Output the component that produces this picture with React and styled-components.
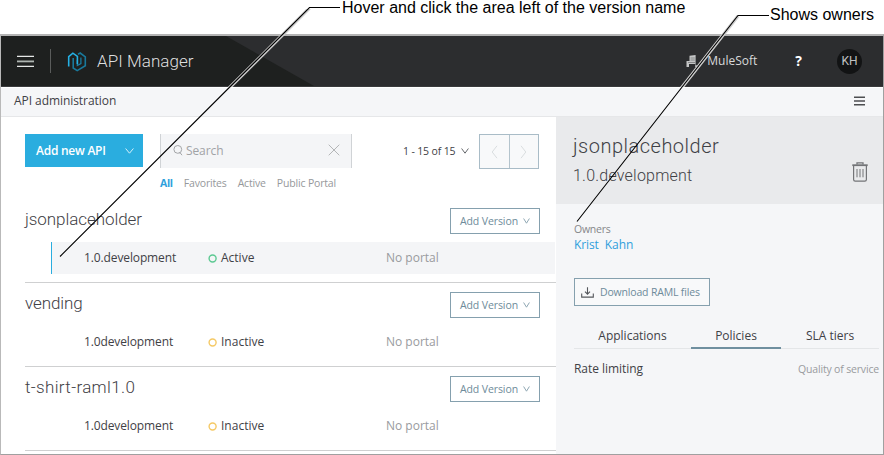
import React from 'react';
import styled, { createGlobalStyle } from 'styled-components';

const Global = createGlobalStyle`
  *, *::before { box-sizing: border-box; }
  body { margin: 0; background: #fff; font-family: "Open Sans", "Noto Sans", sans-serif; color: #3f4146; }
  svg { flex: none; }
`;

const Page = styled.div`
  position: relative;
  width: 884px;
  height: 455px;
  padding-top: 34px;
  overflow: hidden;
`;

const Frame = styled.div`
  display: flex;
  flex-direction: column;
  height: 421px;
  border: 1px solid #a0a0a0;
  border-top: 2px solid #b4b4b4;
  border-left-color: #b9b9b9;
`;

const Label = styled.span`
  display: block;
  white-space: pre;
  font-family: ${p => (p.$din ? 'Roboto, sans-serif' : 'inherit')};
  font-weight: ${p => p.$weight || (p.$din ? 300 : 400)};
  font-size: ${p => p.$size || 12}px;
  line-height: ${p => p.$line || 16}px;
  letter-spacing: ${p => p.$spacing || 0}px;
  color: ${p => p.$color || '#3f4146'};
`;

const Header = styled.header`
  flex: none;
  position: relative;
  height: 51px;
  background: #2c2d2f;
  border-bottom: 1px solid #3a3b3d;
`;

const HeaderShade = styled.div`
  position: absolute;
  inset: 0 auto 0 0;
  width: 313px;
  background: #1e201f;
  clip-path: polygon(0 0, 225px 0, 313px 100%, 0 100%);
`;

const HeaderContent = styled.div`
  position: relative;
  display: flex;
  align-items: center;
  height: 100%;
  padding: 0 21px 0 16px;
`;

const Separator = styled.i`
  width: 1px;
  height: 24px;
  margin: 0 16px;
  background: #5a5c5b;
`;

const ProductName = styled(Label)`
  margin-left: 10px;
`;

const Account = styled.div`
  display: flex;
  align-items: center;
  margin-left: auto;
`;

const OrgName = styled(Label)`
  margin-left: 9px;
`;

const Help = styled(Label)`
  margin-left: 38px;
`;

const Avatar = styled.div`
  display: grid;
  place-items: center;
  width: 25px;
  height: 25px;
  margin-left: 35px;
  border-radius: 50%;
  background: #121314;
`;

const SubBar = styled.div`
  flex: none;
  display: flex;
  align-items: center;
  justify-content: space-between;
  height: 30px;
  padding: 0 18px 2px 13px;
  border-top: 1px solid #fff;
  border-bottom: 1px solid #e6e7e9;
  background: #f5f6f8;
`;

const Body = styled.div`
  display: flex;
  flex: 1;
  min-height: 0;
`;

const ListPane = styled.main`
  width: 555px;
  padding: 17px 0 0 24px;
`;

const Toolbar = styled.div`
  display: flex;
  align-items: flex-start;
  height: 41px;
`;

const BaseButton = styled.button`
  display: flex;
  align-items: center;
  margin: 0;
  padding: 0;
  font: inherit;
  cursor: pointer;
`;

const PrimaryButton = styled(BaseButton)`
  justify-content: space-between;
  width: 118px;
  height: 33px;
  padding: 0 9px 0 11px;
  border: 0;
  background: #2aaddf;
`;

const Search = styled.div`
  display: flex;
  align-items: center;
  gap: 3px;
  width: 192px;
  height: 34px;
  margin-left: 17px;
  padding: 0 11px 1px 12px;
  border: solid #d0d3d6;
  border-width: 0 1px;
  background: #f4f5f7;

  svg:last-child { margin: -2px 0 0 auto; }
`;

const PageRange = styled.div`
  display: flex;
  align-items: center;
  justify-content: space-between;
  width: 66px;
  height: 34px;
  margin-left: 51px;
`;

const Pager = styled.div`
  display: flex;
  width: 60px;
  height: 35px;
  margin-left: 10px;
  border: 1px solid #a9bcc7;
`;

const PagerButton = styled(BaseButton)`
  justify-content: center;
  flex: 1;
  border: 0;
  background: #f8f9fa;

  & + & { border-left: 1px solid #b4c4cd; }
`;

const Filters = styled.nav`
  display: flex;
  gap: 11px;
  height: 24px;
  padding-left: 135px;
`;

const Group = styled.section`
  height: 84px;
  padding-top: 9px;
  border-bottom: 1px solid #cfd0d1;
`;

const GroupHead = styled.div`
  display: flex;
  justify-content: space-between;
  height: 34px;
  padding-right: 16px;
`;

const OutlineButton = styled(BaseButton)`
  gap: ${p => p.$gap}px;
  width: ${p => p.$width}px;
  height: ${p => p.$height}px;
  padding-left: ${p => p.$pad}px;
  border: 1px solid #85a0ae;
  background: ${p => p.$bg || '#fff'};
`;

const VersionRow = styled.div`
  display: grid;
  grid-template-columns: 124px 178px 1fr;
  align-items: center;
  height: 32px;
  margin: 0 1px 0 26px;
  padding-left: 32px;
  border-left: 1px solid ${p => (p.$selected ? '#2aaddf' : 'transparent')};
  background: ${p => (p.$selected ? '#f4f5f7' : 'transparent')};
`;

const Status = styled.div`
  display: flex;
  align-items: center;
  gap: 4px;
`;

const Side = styled.aside`
  flex: 1;
  background: #f5f6f8;
`;

const SideHead = styled.div`
  display: flex;
  justify-content: space-between;
  height: 87px;
  padding: 15px 15px 0 17px;
  background: #e9eaec;

  svg { margin-top: 30px; }
`;

const SideBody = styled.div`
  padding: 18px 4px 0 18px;
`;

const Download = styled.div`
  padding: 24px 0 18px;
`;

const Tabs = styled.div`
  display: grid;
  grid-template-columns: 117px 90px 1fr;
  border-bottom: 1px solid #e4e6e8;
`;

const Tab = styled.div`
  display: flex;
  justify-content: center;
  height: 25px;
  margin-bottom: -1px;
  padding-top: 4px;
  border-bottom: 2px solid ${p => (p.$active ? '#6f8f9f' : 'transparent')};
`;

const Policy = styled.div`
  display: flex;
  justify-content: space-between;
  padding-top: 12px;
`;

const Callouts = styled.div`
  position: absolute;
  inset: 0;
  pointer-events: none;

  svg { position: absolute; inset: 0; }
`;

const Callout = styled.div`
  position: absolute;
  left: ${p => p.$x}px;
  top: ${p => p.$y}px;
  font: 16px/16px "Liberation Sans", Arial, sans-serif;
  white-space: pre;
  color: #000;
`;

const Chevron = ({ color, w = 9, h = 6 }) => (
  <svg width={w} height={h} viewBox={`0 0 ${w} ${h}`} fill="none" stroke={color}>
    <path d={`M.6.5 ${w / 2} ${h - 0.8} ${w - 0.6}.5`} />
  </svg>
);

const Arrow = ({ flip }) => (
  <svg width="7" height="14" viewBox="0 0 7 14" fill="none" stroke="#d9dddf">
    <path d={flip ? 'M1 .8 5.8 7 1 13.200' : 'M6 .8 1.2 7 6 13.200'} />
  </svg>
);

const Ring = ({ color }) => (
  <svg width="9" height="9" viewBox="0 0 9 9" fill="none" stroke={color} strokeWidth="1.4">
    <circle cx="4.6" cy="4.500" r="3.500" />
  </svg>
);

const MenuIcon = () => (
  <svg width="17" height="13" viewBox="0 0 17 13" stroke="#e5e7e6" strokeWidth="1.2">
    <path d="M0 1.4h17M0 11.400h17" />
    <path d="M0 6.4h17" stroke="#aeb5b1" strokeWidth="1.8" />
  </svg>
);

const Logo = () => (
  <svg width="20" height="21" viewBox="0 0 20 21" fill="none" strokeWidth="1.6">
    <path d="M11 3.200 13.200 2l5.100 3.800v8.900L10.200 19.600 6.200 17V7" stroke="#19799b" />
    <path d="M10.300 9v5.600l3.600-2V6.600" stroke="#1b81a6" strokeWidth="1.2" />
    <path d="M1.700 15.600V5.700L5.900 2.200l4.500 3.100V13" stroke="#25b0e4" />
  </svg>
);

const Building = () => (
  <svg width="12" height="12" viewBox="0 0 12 12">
    <path d="M3.500.8 9.600 0v10.300h1.500V12H9.200V9H3v3H.5V6h3z" fill="#c4c5c6" />
    <path d="M4.500 3h4.300M4.500 5h4.300M2 7.500h7" stroke="#77787a" strokeWidth=".8" />
  </svg>
);

const SearchIcon = () => (
  <svg width="10" height="11" viewBox="0 0 10 11" fill="none" stroke="#a3a5a8">
    <circle cx="4.800" cy="4.400" r="3.900" />
    <path d="m6.300 8 .7-.4 2 2.600" />
  </svg>
);

const Close = () => (
  <svg width="12" height="12" viewBox="0 0 12 12" stroke="#b4b6b8">
    <path d="m.7.7 10.600 10.600M11.300.7.7 11.300" />
  </svg>
);

const ListIcon = () => (
  <svg width="11" height="10" viewBox="0 0 11 10" stroke="#4d4e51" strokeWidth="1.600">
    <path d="M0 1.200h11M0 5h11M0 8.800h11" />
  </svg>
);

const Trash = () => (
  <svg width="16" height="20" viewBox="0 0 16 20" fill="none" stroke="#737477">
    <path d="M.3 3.200h15.400" strokeWidth="1.800" />
    <path d="M5 2.600V.9h6v1.700" strokeWidth="1.300" />
    <path d="M1.600 4v13.400q0 1.700 1.600 1.700h9.600q1.600 0 1.600-1.700V4" strokeWidth="1.200" />
    <path d="M5 7v8.300M8 7v8.300M11 7v8.300" />
  </svg>
);

const DownloadIcon = () => (
  <svg width="13" height="11" viewBox="0 0 13 11" fill="none" stroke="#55585c" strokeWidth="1.100">
    <path d="M.7 6.500v3.600h11.600V6.500M6.500.3v6.500M4 4.600l2.500 2.600L9 4.600" />
  </svg>
);

const apis = [
  { name: 'jsonplaceholder', spacing: -0.07, version: '1.0.development', status: 'Active', selected: true },
  { name: 'vending', spacing: -0.1, version: '1.0development', status: 'Inactive' },
  { name: 't-shirt-raml1.0', spacing: 0.35, version: '1.0development', status: 'Inactive' },
];

function ApiGroup({ api }) {
  return (
    <Group>
      <GroupHead>
        <Label $din $size={17} $line={22} $spacing={api.spacing}>{api.name}</Label>
        <OutlineButton $width={90} $height={26} $pad={9} $gap={5}>
          <Label $size={10.5} $spacing={-0.1} $color="#6e8b9a">Add Version</Label>
          <Chevron color="#8fa7b3" w={7} />
        </OutlineButton>
      </GroupHead>
      <VersionRow $selected={api.selected}>
        <Label $spacing={-0.12}>{api.version}</Label>
        <Status>
          <Ring color={api.selected ? '#5cc992' : '#f5c965'} />
          <Label>{api.status}</Label>
        </Status>
        <Label $color="#999b9e">No portal</Label>
      </VersionRow>
    </Group>
  );
}

const filters = ['Favorites', 'Active', 'Public Portal'];

export default function App() {
  return (
    <Page>
      <Global />
      <Frame>
        <Header>
          <HeaderShade />
          <HeaderContent>
            <MenuIcon />
            <Separator />
            <Logo />
            <ProductName $din $size={17} $line={20} $spacing={0.05} $color="#dedfdf">API Manager</ProductName>
            <Account>
              <Building />
              <OrgName $color="#d8d9da">MuleSoft</OrgName>
              <Help $size={14} $weight={700} $color="#fff">?</Help>
              <Avatar><Label $din $size={12} $weight={400} $color="#bfc0c1">KH</Label></Avatar>
            </Account>
          </HeaderContent>
        </Header>
        <SubBar>
          <Label $spacing={-0.06}>API administration</Label>
          <ListIcon />
        </SubBar>
        <Body>
          <ListPane>
            <Toolbar>
              <PrimaryButton>
                <Label $weight={600} $spacing={-0.25} $color="#fff">Add new API</Label>
                <Chevron color="#d5f0fa" />
              </PrimaryButton>
              <Search>
                <SearchIcon />
                <Label $spacing={-0.1} $color="#a1a3a6">Search</Label>
                <Close />
              </Search>
              <PageRange>
                <Label $size={10.5} $spacing={-0.15}>1 - 15 of 15</Label>
                <Chevron color="#66696d" w={8} />
              </PageRange>
              <Pager>
                <PagerButton><Arrow /></PagerButton>
                <PagerButton><Arrow flip /></PagerButton>
              </Pager>
            </Toolbar>
            <Filters>
              <Label $size={10.5} $weight={700} $spacing={-0.3} $color="#2f9fdc">All</Label>
              {filters.map(name => (
                <Label key={name} $size={10.5} $spacing={-0.17} $color="#96989b">{name}</Label>
              ))}
            </Filters>
            {apis.map(api => <ApiGroup key={api.name} api={api} />)}
          </ListPane>
          <Side>
            <SideHead>
              <div>
                <Label $din $size={20} $line={28} $spacing={0.5}>jsonplaceholder</Label>
                <Label $din $size={16} $line={32} $spacing={0.22}>1.0.development</Label>
              </div>
              <Trash />
            </SideHead>
            <SideBody>
              <Label $size={10.5} $line={14} $spacing={-0.25} $color="#85878a">Owners</Label>
              <Label $line={18} $spacing={-0.1} $color="#2f9fdc">Krist  Kahn</Label>
              <Download>
                <OutlineButton $width={136} $height={28} $pad={6} $gap={6} $bg="#f8f9fa">
                  <DownloadIcon />
                  <Label $size={10.5} $spacing={-0.17} $color="#6e8b9a">Download RAML files</Label>
                </OutlineButton>
              </Download>
              <Tabs>
                <Tab><Label>Applications</Label></Tab>
                <Tab $active><Label>Policies</Label></Tab>
                <Tab><Label>SLA tiers</Label></Tab>
              </Tabs>
              <Policy>
                <Label $spacing={-0.05}>Rate limiting</Label>
                <Label $size={10.5} $spacing={-0.17} $color="#999b9e">Quality of service</Label>
              </Policy>
            </SideBody>
          </Side>
        </Body>
      </Frame>
      <Callouts>
        <svg width="884" height="455" viewBox="0 0 884 455" fill="none">
          <clipPath id="halo"><path d="M0 9h884v78H0z" /></clipPath>
          <path d="M309.500 8 60 256.500M738 16 577 221" stroke="#cfcfcf" strokeWidth="3.400" clipPath="url(#halo)" />
          <path d="M340 7.500h-30.500L60 256.500" stroke="#000" strokeWidth="1.100" />
          <path d="M769 15.500h-31L577 221.500" stroke="#000" strokeWidth="1.100" />
        </svg>
        <Callout $x={342} $y={0}>Hover and click the area left of the version name</Callout>
        <Callout $x={770} $y={7}>Shows owners</Callout>
      </Callouts>
    </Page>
  );
}
